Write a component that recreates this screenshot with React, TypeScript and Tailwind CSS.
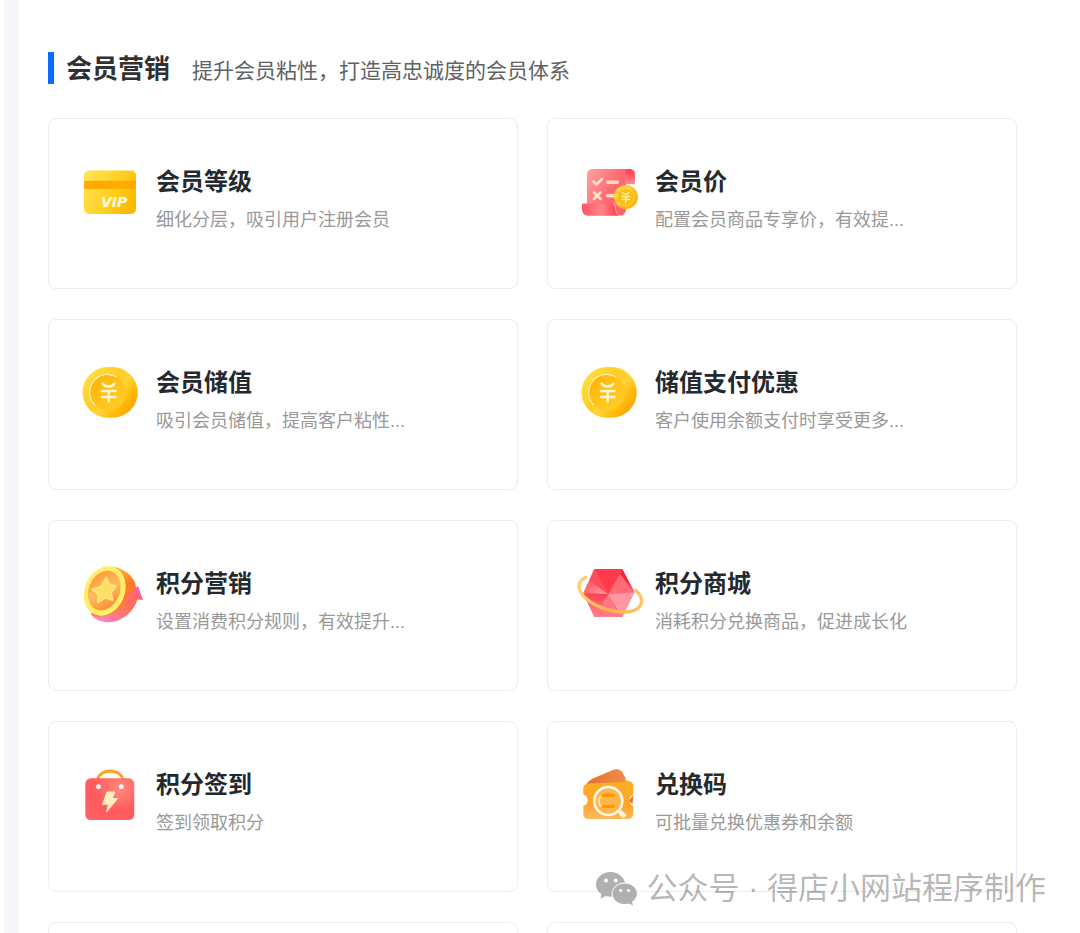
import type { ReactNode } from 'react';

function VipCardIcon() {
  return (
    <svg viewBox="0 0 60 60" className="w-15 h-15 shrink-0 overflow-visible" aria-hidden="true">
      <defs>
        <linearGradient id="vip-body" x1="0" y1="0.2" x2="1" y2="0.6">
          <stop offset="0" stopColor="#ffe450" />
          <stop offset="0.6" stopColor="#ffcf1f" />
          <stop offset="1" stopColor="#ffb800" />
        </linearGradient>
      </defs>
      <rect x="4" y="8.5" width="52" height="43.5" rx="5" fill="url(#vip-body)" />
      <rect x="4" y="18.8" width="52" height="8.2" fill="#ffab00" />
      <text x="21" y="45" fontSize="14" fontWeight="bold" fontStyle="italic" fontFamily="DejaVu Sans, sans-serif" fill="#fffbe0">VIP</text>
    </svg>
  );
}

function PriceListIcon() {
  return (
    <svg viewBox="0 0 60 60" className="w-15 h-15 shrink-0 overflow-visible" aria-hidden="true">
      <defs>
        <linearGradient id="price-paper" x1="0" y1="0.2" x2="1" y2="0.8">
          <stop offset="0" stopColor="#ff9a9c" />
          <stop offset="0.5" stopColor="#ff6b72" />
          <stop offset="1" stopColor="#ff6068" />
        </linearGradient>
        <linearGradient id="price-roll" x1="0" y1="0" x2="0" y2="1">
          <stop offset="0" stopColor="#ff3b4c" />
          <stop offset="1" stopColor="#ff8d92" />
        </linearGradient>
        <linearGradient id="price-foot" x1="0" y1="0" x2="1" y2="0">
          <stop offset="0" stopColor="#ff5562" />
          <stop offset="0.5" stopColor="#ff8388" />
          <stop offset="1" stopColor="#ff3144" />
        </linearGradient>
        <linearGradient id="price-coin" x1="0" y1="0" x2="1" y2="1">
          <stop offset="0" stopColor="#ffe04a" />
          <stop offset="1" stopColor="#ffa900" />
        </linearGradient>
      </defs>
      <path d="M14 7h38c-3 0-5 2-5 6v34c0 4-2 6-5 6H8V13c0-4 2-6 6-6z" fill="url(#price-paper)" />
      <path d="M50 7c4 0 6 2 6 6v7c0 1.500-.6 2.300-2 2.300h-8V13c0-4 1-6 4-6z" fill="url(#price-roll)" />
      <path d="M3 43c0-1 .6-1.500 1.500-1.500H34c2 0 2 2 2.500 5 .5 4 2 7 5.500 7.200H9c-4.500 0-6-3.700-6-7.500z" fill="url(#price-foot)" />
      <path d="M34 41.500c2 0 2 2 2.500 5 .5 4 2 7 5.500 7.200 3.500 0 4.500-3 5-6.700" fill="none" stroke="#ffb5b5" strokeWidth="1" />
      <path d="M14.500 19.500l3 3 5.500-5.500M15 30.500l6.500 6.500M21.500 30.500L15 37" fill="none" stroke="#ffe3cc" strokeWidth="2.500" strokeLinecap="round" strokeLinejoin="round" />
      <path d="M28.500 20.300h10M28.500 33.700h8" stroke="#ffdcc0" strokeWidth="3.400" strokeLinecap="round" />
      <circle cx="47" cy="35" r="12" fill="url(#price-coin)" />
      <circle cx="46.500" cy="35" r="8.500" fill="#ffbd12" stroke="#ffd84c" strokeWidth="1" />
      <path d="M43.500 30.500c1 2 5.500 2 6.500 0M43 34.500h7.500M43 37.500h7.500M46.700 34v6.500" fill="none" stroke="#fff3b0" strokeWidth="1.300" strokeLinecap="round" />
    </svg>
  );
}

function YuanCoinIcon() {
  return (
    <svg viewBox="0 0 60 60" className="w-15 h-15 shrink-0 overflow-visible" aria-hidden="true">
      <defs>
        <linearGradient id="yuan-edge" x1="0" y1="0" x2="1" y2="0.8">
          <stop offset="0" stopColor="#ffe14a" />
          <stop offset="0.5" stopColor="#ffcd22" />
          <stop offset="0.62" stopColor="#ffd43a" />
          <stop offset="0.78" stopColor="#ffbd0c" />
          <stop offset="1" stopColor="#ffa000" />
        </linearGradient>
        <linearGradient id="yuan-face" x1="0" y1="0" x2="1" y2="1">
          <stop offset="0" stopColor="#ffb000" />
          <stop offset="0.5" stopColor="#ffc21a" />
          <stop offset="1" stopColor="#ffcf2c" />
        </linearGradient>
      </defs>
      <rect x="2.500" y="4" width="55.300" height="50.700" rx="25.350" fill="url(#yuan-edge)" />
      <circle cx="28" cy="29.500" r="18" fill="url(#yuan-face)" />
      <path d="M15 42.200A18 18 0 0 1 37 14" fill="none" stroke="#fff0b0" strokeWidth="1.200" />
      <path d="M22.500 20.500c2.500 4 9.500 4 12 0M22 28h13.500M22 34h13.500M28.700 28v10.500" fill="none" stroke="#fff8d0" strokeWidth="2.400" strokeLinecap="round" />
    </svg>
  );
}

function PointsCoinIcon() {
  return (
    <svg viewBox="0 0 60 60" className="w-15 h-15 shrink-0 overflow-visible" aria-hidden="true">
      <defs>
        <linearGradient id="points-side" x1="0.3" y1="0" x2="0.5" y2="1">
          <stop offset="0" stopColor="#ffc04a" />
          <stop offset="0.4" stopColor="#ff7a24" />
          <stop offset="0.75" stopColor="#ff7a34" />
          <stop offset="1" stopColor="#ff9a50" />
        </linearGradient>
        <linearGradient id="points-face" x1="0" y1="0" x2="1" y2="1">
          <stop offset="0" stopColor="#ff8f2c" />
          <stop offset="0.5" stopColor="#ffbc60" />
          <stop offset="1" stopColor="#ff7a24" />
        </linearGradient>
        <linearGradient id="points-arrow" x1="0" y1="1" x2="1" y2="0">
          <stop offset="0" stopColor="#ff86ea" />
          <stop offset="0.45" stopColor="#ff7468" />
          <stop offset="0.75" stopColor="#ff6a5e" />
          <stop offset="1" stopColor="#ff55c0" />
        </linearGradient>
      </defs>
      <path d="M31 2.500c11 1 24 9 25 21 1 15-11 30-26 33-8 1-14-1-19-6z" fill="url(#points-side)" />
      <path d="M12 52c15 3 30-4 36-17l-4-.500 14-12.500 5 14-5.500-.5C54 46 45 56 32 58c-8 1-15-1-20-6z" fill="url(#points-arrow)" />
      <ellipse cx="24.700" cy="27" rx="20" ry="25.500" transform="rotate(24 24.700 27)" fill="#ffee68" />
      <ellipse cx="24.200" cy="26.500" rx="15.500" ry="20.500" transform="rotate(24 24.200 26.500)" fill="url(#points-face)" />
      <path d="M26.500 13.500l2.500 7.500 7 1-5 6.500 1.500 7.500-7-2.500-7.500 5 .5-8.500-6-4.500 8-2.500z" fill="#ffdf62" stroke="#ffe676" strokeWidth="2" strokeLinejoin="round" />
    </svg>
  );
}

function GemIcon() {
  return (
    <svg viewBox="0 0 60 60" className="w-15 h-15 shrink-0 overflow-visible" aria-hidden="true">
      <defs>
        <linearGradient id="gem-left" x1="0" y1="0" x2="1" y2="0.6">
          <stop offset="0" stopColor="#ff5360" />
          <stop offset="1" stopColor="#ff929b" />
        </linearGradient>
        <linearGradient id="gem-low" x1="0" y1="0" x2="0" y2="1">
          <stop offset="0" stopColor="#ff3d50" />
          <stop offset="1" stopColor="#ff8993" />
        </linearGradient>
        <linearGradient id="gem-ring" x1="0" y1="0" x2="1" y2="0">
          <stop offset="0" stopColor="#ffcf78" />
          <stop offset="0.5" stopColor="#ffb04a" />
          <stop offset="1" stopColor="#ffc46a" />
        </linearGradient>
      </defs>
      <path d="M15.300 5h28l12 23.300-12 24.400h-28L4.300 29.300z" fill="#ff5968" />
      <path d="M15.300 5h28L41 10 29.300 30.300z" fill="#ff3a4d" />
      <path d="M43.300 5l12 23.300L41 10z" fill="#ff1f36" />
      <path d="M41 10l14.300 18.300-26 2z" fill="#ff6c78" />
      <path d="M15.300 5l14 25.300-19-13.500z" fill="#ff4c5c" />
      <path d="M10.300 16.800l19 13.500-25-1z" fill="url(#gem-left)" />
      <path d="M4.300 29.300l25 1-14 22.400z" fill="url(#gem-low)" />
      <path d="M29.300 30.300l14 22.400h-28z" fill="#ff7884" />
      <path d="M29.300 30.300l26-2-12 24.400z" fill="#ff98a0" />
      <path d="M6.500 13.500C-3 18-1.500 27 7 34.500 18 44.500 39 50 51.500 47.500 64 45 66 34 56.700 26.500" fill="none" stroke="url(#gem-ring)" strokeWidth="3.400" strokeLinecap="round" />
    </svg>
  );
}

function SignBagIcon() {
  return (
    <svg viewBox="0 0 60 60" className="w-15 h-15 shrink-0 overflow-visible" aria-hidden="true">
      <defs>
        <radialGradient id="bag-body" cx="0.7" cy="0.25" r="0.9">
          <stop offset="0" stopColor="#ff8a80" />
          <stop offset="0.6" stopColor="#ff5a5a" />
          <stop offset="1" stopColor="#ff6068" />
        </radialGradient>
      </defs>
      <path d="M17.500 15c2-12 23.500-12 25.500 0" fill="none" stroke="#ffa21f" strokeWidth="2.800" />
      <rect x="5.300" y="13.300" width="49" height="41.700" rx="5.500" fill="url(#bag-body)" />
      <circle cx="18.500" cy="21.700" r="2.400" fill="#fff" />
      <circle cx="41.300" cy="21.700" r="2.400" fill="#fff" />
      <path d="M27 27h8l-3 6.500h5.700L26.500 47l2-7.700h-6z" fill="#ffecc4" stroke="#ffecc4" strokeWidth="1" strokeLinejoin="round" />
    </svg>
  );
}

function RedeemIcon() {
  return (
    <svg viewBox="0 0 60 60" className="w-15 h-15 shrink-0 overflow-visible" aria-hidden="true">
      <defs>
        <linearGradient id="redeem-body" x1="0.5" y1="0" x2="0.4" y2="1">
          <stop offset="0" stopColor="#ffad24" />
          <stop offset="0.6" stopColor="#ffa524" />
          <stop offset="1" stopColor="#ffb95c" />
        </linearGradient>
        <linearGradient id="redeem-flap" x1="0" y1="0" x2="1" y2="0">
          <stop offset="0" stopColor="#e56d2a" />
          <stop offset="1" stopColor="#f08c4c" />
        </linearGradient>
      </defs>
      <path d="M7 20c1-3 4-5 8-7L34 5c4-1.500 7-1 9.500 2.500l3.200 5.800-.7 6.700z" fill="url(#redeem-flap)" />
      <path d="M49 36l5.500-6-1 9z" fill="#e9792e" />
      <path d="M9 18.500l36-1.500 2-2 4 1.500c2 .5 3.300 2 3.300 4v9c-5.500 2-5.500 9.500 0 11.500v7.500c0 3-2 5.500-5 5.500H9.300c-3 0-5-2-5-5v-8c6-2 6-9.500 0-11.500v-6c0-3 1.700-4.800 4.700-5z" fill="url(#redeem-body)" />
      <circle cx="29.300" cy="36" r="14" fill="#ffb648" stroke="#fffaf0" strokeWidth="2.600" />
      <path d="M24.500 30.300h10M24.500 41.500h10" stroke="#ff9600" strokeWidth="3.200" strokeLinecap="round" />
      <path d="M21.500 31.500c-2 3-2 6.500 0 9.500" fill="none" stroke="#ffe2ae" strokeWidth="1.600" strokeLinecap="round" />
      <path d="M39.500 46l1.500 1.500" stroke="#fffaf0" strokeWidth="2.500" />
      <path d="M42 48l2.500 2.500" stroke="#fff3e4" strokeWidth="5" strokeLinecap="round" />
    </svg>
  );
}

function WechatIcon() {
  return (
    <svg viewBox="0 0 42 34" className="w-[42px] h-[34px]" aria-hidden="true">
      <path d="M14.500 0C6.500 0 0 5.500 0 12.500c0 4 2 7.300 5.300 9.600L4.500 26.700l5-2.700c2 .6 4.500.9 6.500.8-2-7 4-14.500 13-14.300C27.500 4.500 21.500 0 14.500 0z" fill="#b0b0b0" />
      <path d="M28.700 11.500c-7 0-12.200 4.600-12.200 10.200S21.700 32 28.700 32c1.500 0 3-.2 4.300-.6l4 2-1-3.600c3-2 4.900-4.800 4.900-8.100 0-5.600-5.200-10.200-12.200-10.200z" fill="#b0b0b0" />
      <circle cx="10" cy="8.500" r="1.900" fill="#fff" />
      <circle cx="19.700" cy="8.500" r="1.900" fill="#fff" />
      <circle cx="24.700" cy="18.500" r="1.600" fill="#fff" />
      <circle cx="32.500" cy="18.500" r="1.600" fill="#fff" />
    </svg>
  );
}

type Feature = { title: string; desc: string; icon: ReactNode };

const features: Feature[] = [
  { title: '会员等级', desc: '细化分层，吸引用户注册会员', icon: <VipCardIcon /> },
  { title: '会员价', desc: '配置会员商品专享价，有效提...', icon: <PriceListIcon /> },
  { title: '会员储值', desc: '吸引会员储值，提高客户粘性...', icon: <YuanCoinIcon /> },
  { title: '储值支付优惠', desc: '客户使用余额支付时享受更多...', icon: <YuanCoinIcon /> },
  { title: '积分营销', desc: '设置消费积分规则，有效提升...', icon: <PointsCoinIcon /> },
  { title: '积分商城', desc: '消耗积分兑换商品，促进成长化', icon: <GemIcon /> },
  { title: '积分签到', desc: '签到领取积分', icon: <SignBagIcon /> },
  { title: '兑换码', desc: '可批量兑换优惠券和余额', icon: <RedeemIcon /> },
];

export default function App() {
  return (
    <div className="relative flex h-screen overflow-hidden bg-white pl-1 font-['Liberation_Sans','Noto_Sans_CJK_SC',sans-serif]" lang="zh-CN">
      <div className="w-[15px] shrink-0 bg-[#f5f7fa]"></div>

      <main className="flex-1 pl-[29px] pr-[63px] pt-[52px]">
        {/* Section heading */}
        <header className="flex items-center border-l-6 border-[#0a6cff] h-8 pl-3 mb-[34px]">
          <div className="flex items-baseline gap-[22px] pt-1">
            <h1 className="text-[26px] leading-8 font-bold text-[#303133]">会员营销</h1>
            <p className="text-[21px] leading-8 text-[#606266]">提升会员粘性，打造高忠诚度的会员体系</p>
          </div>
        </header>

        {/* Feature cards */}
        <div className="grid grid-cols-2 gap-x-[29px] gap-y-[30px]">
          {features.map((item) => (
            <a
              key={item.title}
              href="#"
              className="flex items-start gap-4 min-h-[171px] px-[31px] py-[43px] rounded-lg border border-[#ebedf0]"
            >
              {item.icon}
              <div className="pt-1 min-w-0">
                <h2 className="text-[24px] leading-8 font-bold text-[#24292f]">{item.title}</h2>
                <p className="mt-2 text-[18px] leading-7 text-[#999999] whitespace-nowrap">{item.desc}</p>
              </div>
            </a>
          ))}
          <div className="min-h-[171px] rounded-lg border border-[#ebedf0]"></div>
          <div className="min-h-[171px] rounded-lg border border-[#ebedf0]"></div>
        </div>
      </main>

      {/* Account watermark */}
      <div className="absolute right-[34px] bottom-6 flex items-center gap-2">
        <WechatIcon />
        <span className="text-[31px] leading-10 text-black/30 whitespace-nowrap">公众号 · 得店小网站程序制作</span>
      </div>
    </div>
  );
}
